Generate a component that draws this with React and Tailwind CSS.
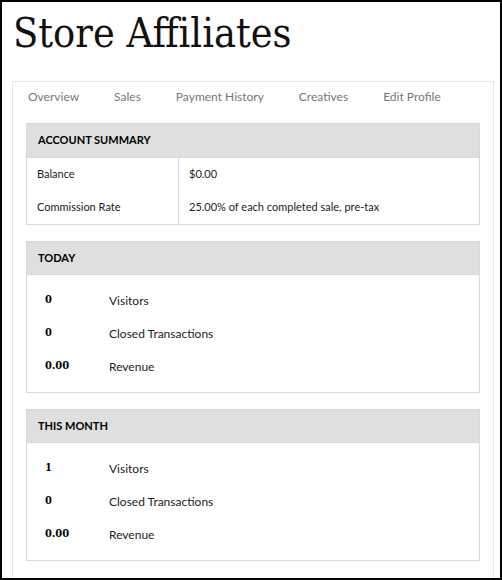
export default function App() {
  const tabs = ["Overview", "Sales", "Payment History", "Creatives", "Edit Profile"];
  const body = { fontFamily: 'Lato, "Noto Sans", sans-serif' };
  const serif = { fontFamily: '"DejaVu Serif Condensed", "DejaVu Serif", serif' };

  const Stats = ({ title, rows }) => (
    <div className="border border-[#d9d9d9]">
      <div className="h-[33px] bg-[#dfdfdf] flex items-center pl-[11px] text-[11px] font-bold text-black border-b border-[#d9d9d9]">
        {title}
      </div>
      <div className="pt-[9px] pb-[9px]">
        {rows.map(([n, l], i) => (
          <div key={i} className="h-[33px] flex items-center">
            <div className="w-[82px] pl-[18px] text-[11px] font-bold text-black font-stretch-condensed" style={serif}>{n}</div>
            <div className="text-[12px] text-[#222]">{l}</div>
          </div>
        ))}
      </div>
    </div>
  );

  return (
    <div className="w-[502px] h-[580px] border-2 border-black bg-white overflow-hidden box-border" style={body}>
      <h1 className="pl-[11px] pt-[6px] h-[79px] text-[41px] leading-[50px] text-[#111] font-stretch-condensed" style={serif}>
        Store Affiliates
      </h1>
      <div className="ml-[10px] w-[482px] h-[520px] border border-[#e6e6e6]">
        <div className="h-[30px] flex items-center gap-[35px] pl-[15px] text-[12px] text-[#777]">
          {tabs.map((t) => (
            <span key={t}>{t}</span>
          ))}
        </div>
        <div className="mx-[13px] mt-[11px] flex flex-col gap-[16px]">
          <div className="border border-[#d9d9d9]">
            <div className="h-[33px] bg-[#dfdfdf] flex items-center pl-[11px] text-[11px] font-bold text-black">
              ACCOUNT SUMMARY
            </div>
            <div className="flex text-[11px] text-[#222] border-t border-[#d9d9d9]">
              <div className="w-[152px] border-r border-[#d9d9d9]">
                <div className="h-[33px] flex items-center pl-[10px]">Balance</div>
                <div className="h-[33px] flex items-center pl-[10px]">Commission Rate</div>
              </div>
              <div className="flex-1">
                <div className="h-[33px] flex items-center pl-[10px]">$0.00</div>
                <div className="h-[33px] flex items-center pl-[10px]">25.00% of each completed sale, pre-tax</div>
              </div>
            </div>
          </div>
          <Stats title="TODAY" rows={[["0", "Visitors"], ["0", "Closed Transactions"], ["0.00", "Revenue"]]} />
          <Stats title="THIS MONTH" rows={[["1", "Visitors"], ["0", "Closed Transactions"], ["0.00", "Revenue"]]} />
        </div>
      </div>
    </div>
  );
}
